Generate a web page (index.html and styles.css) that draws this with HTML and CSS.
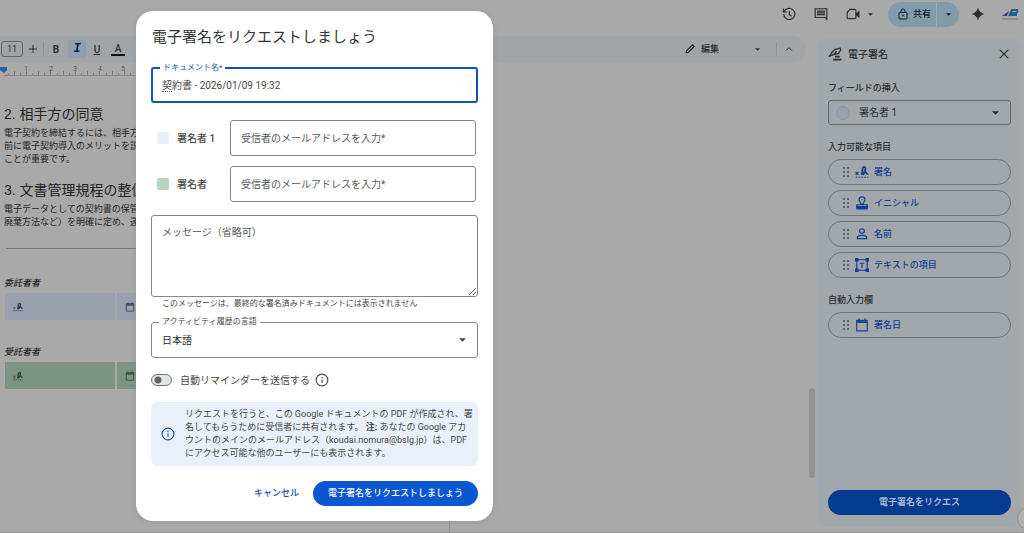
FILE: index.html
```html
<!DOCTYPE html>
<html lang="ja">
<head>
<meta charset="utf-8">
<title>電子署名</title>
<link rel="stylesheet" href="styles.css">
</head>
<body>
<svg class="defs" aria-hidden="true">
  <defs>
    <symbol id="grip" viewBox="0 0 8 12"><g fill="#62666a"><rect x="1" y="1" width="2" height="2"/><rect x="5" y="1" width="2" height="2"/><rect x="1" y="5" width="2" height="2"/><rect x="5" y="5" width="2" height="2"/><rect x="1" y="9" width="2" height="2"/><rect x="5" y="9" width="2" height="2"/></g></symbol>
    <symbol id="sign" viewBox="0 0 24 24"><g fill="none" stroke="currentColor" stroke-width="2"><path d="M1 12l5 5M6 12l-5 5"/><path stroke-width="3" d="M10 16c5-2 8-6 8-10 0-4-4-4-5 0-1 5-1 10 1 10s2-4 4-4c2 0 1 4 5 3"/><path d="M1 21h22" stroke-dasharray="3 2"/></g></symbol>
    <symbol id="cal" viewBox="0 0 24 24"><g fill="none" stroke="currentColor"><path stroke-width="2" d="M3 4h18v18H3zM7 1v4M17 1v4"/><path stroke-width="3" d="M3 7h18"/></g></symbol>
    <symbol id="down" viewBox="0 0 10 5"><path fill="currentColor" d="M0 0h10L5 5z"/></symbol>
    <symbol id="info" viewBox="0 0 24 24"><circle cx="12" cy="12" r="10" fill="none" stroke="currentColor" stroke-width="2"/><path fill="currentColor" d="M11 11h2v6h-2zM11 7h2v2h-2z"/></symbol>
  </defs>
</svg>
<div class="app">
  <header class="topbar">
    <button class="icon-btn" aria-label="変更履歴"><svg class="ic14" viewBox="0 0 24 24" fill="none" stroke="currentColor" stroke-width="2"><path d="M3 12a9.500 9.500 0 1 0 3-7L2.500 8.500M2.500 2.500v6h6M12.500 7v6l4 3"/></svg></button>
    <button class="icon-btn" aria-label="コメント"><svg class="ic14" viewBox="0 0 24 24"><path fill="none" stroke="currentColor" stroke-width="2" d="M2 3h20v18l-3-3H2z"/><path fill="currentColor" d="M5 6h14v2H5zM5 9h14v2H5zM5 12h14v2H5z"/></svg></button>
    <button class="icon-btn meet" aria-label="通話"><svg class="ic14" viewBox="0 0 24 24"><path fill="none" stroke="currentColor" stroke-width="2" d="M7 4h8q2 0 2 2v12q0 2-2 2H4q-2 0-2-2V9z"/><path fill="currentColor" d="M17 11l6-5v13l-6-5z"/></svg><svg class="caret-s"><use href="#down"/></svg></button>
    <div class="share">
      <button class="share-main"><svg class="ic12" viewBox="0 0 24 24" fill="none" stroke="currentColor" stroke-width="2"><rect x="4" y="9" width="16" height="13" rx="1"/><path d="M8 9V6a4 4 0 0 1 8 0v3"/><circle cx="12" cy="15" r="1"/></svg>共有</button>
      <button class="share-more" aria-label="共有オプション"><svg class="caret-s"><use href="#down"/></svg></button>
    </div>
    <button class="icon-btn spark" aria-label="Gemini"><svg class="ic14" viewBox="0 0 24 24"><path fill="currentColor" d="M12 1q2 9 11 11q-9 2-11 11q-2-9-11-11q9-2 11-11z"/></svg></button>
    <svg class="logo" viewBox="0 0 18 12"><path fill="#49366f" d="M1 8l7-5-2 5z"/><path fill="none" stroke="#1d5f96" stroke-width="2" d="M8 8l3-6h5q1 2-1 3h-5M8 7h8"/><path stroke="#77777d" d="M1 11h16"/></svg>
  </header>
  <div class="workspace">
    <main class="editor">
      <div class="toolbar">
        <input class="size" value="11" aria-label="フォントサイズ">
        <button class="tool plus" aria-label="拡大"><svg class="ic8" viewBox="0 0 8 8"><path stroke="currentColor" d="M4 0v8M0 4h8"/></svg></button>
        <span class="sep"></span>
        <button class="tool bold">B</button>
        <button class="tool italic">I</button>
        <button class="tool under">U</button>
        <button class="tool color">A</button>
        <button class="mode"><svg class="ic10" viewBox="0 0 24 24"><path fill="none" stroke="currentColor" stroke-width="3" d="M3 21l1-5L18 2l4 4L8 20z"/></svg><span>編集</span><svg class="caret-s"><use href="#down"/></svg></button>
        <span class="sep"></span>
        <button class="tool up" aria-label="メニューを隠す"><svg class="ic8" viewBox="0 0 24 24" fill="none" stroke="currentColor" stroke-width="3"><path d="M3 17l9-9 9 9"/></svg></button>
      </div>
      <svg class="ruler" width="150" height="18">
        <defs><pattern id="ticks" x="2" y="0" width="49" height="18" patternUnits="userSpaceOnUse"><path stroke="#77797b" d="M6.500 12v3M12.500 10v5M18.500 12v3M24.500 10v5M30.500 12v3M36.500 10v5M42.500 12v3M48.500 10v5"/></pattern></defs>
        <rect x="4" width="146" height="18" fill="url(#ticks)"/>
        <path stroke="#858789" d="M4 14.500h146"/>
        <path fill="#235fae" d="M0 6h7v3l-3 3-4-3z"/>
        <g class="nums"><text x="26" y="10">1</text><text x="51" y="10">2</text><text x="75" y="10">3</text><text x="100" y="10">4</text><text x="123" y="10">5</text></g>
      </svg>
      <article class="doc">
        <h2>2. 相手方の同意</h2>
        <p>電子契約を締結するには、相手方の<br>前に電子契約導入のメリットを説明<br>ことが重要です。</p>
        <h2>3. 文書管理規程の整備</h2>
        <p>電子データとしての契約書の保管・<br>廃棄方法など）を明確に定め、運用</p>
        <hr>
        <div class="party">委託者者</div>
        <div class="slots"><span class="slot wide"><svg class="ic10"><use href="#sign"/></svg></span><span class="slot"><svg class="ic10"><use href="#cal"/></svg></span></div>
        <div class="party">受託者者</div>
        <div class="slots green"><span class="slot wide"><svg class="ic10"><use href="#sign"/></svg></span><span class="slot"><svg class="ic10"><use href="#cal"/></svg></span></div>
      </article>
      <span class="thumb"></span>
      <span class="page-edge"></span>
    </main>
    <aside class="panel">
      <div class="panel-head"><svg class="ic14" viewBox="0 0 24 24"><path fill="none" stroke="currentColor" stroke-width="2" d="M1 16c3-1 4-3 5-6l6-6 9-2 1 3-4 6-8 2 5-6M1 16l9-3"/><path fill="currentColor" d="M12 15h8v3h-8zM9 20h14v3H9z"/></svg><h1>電子署名</h1><button class="close" aria-label="閉じる"><svg class="ic10" viewBox="0 0 24 24"><path stroke="currentColor" stroke-width="3" d="M2 2l20 20M22 2L2 22"/></svg></button></div>
      <label class="caption" for="who">フィールドの挿入</label>
      <div class="pick"><span class="dot"></span><select id="who"><option>署名者 1</option></select><svg class="caret"><use href="#down"/></svg></div>
      <h3 class="caption">入力可能な項目</h3>
      <div class="fields">
        <button class="field"><svg class="grip"><use href="#grip"/></svg><svg class="ic14"><use href="#sign"/></svg>署名</button>
        <button class="field"><svg class="grip"><use href="#grip"/></svg><svg class="ic14" viewBox="0 0 24 24"><path fill="none" stroke="currentColor" stroke-width="2" d="M10 14c0-3-3-5-3-8 0-6 10-6 10 0 0 3-3 5-3 8zM3 20v-5h18v5"/><circle cx="12" cy="6" r="1" fill="currentColor"/><path fill="currentColor" d="M2 17h20v6H2z"/></svg>イニシャル</button>
        <button class="field"><svg class="grip"><use href="#grip"/></svg><svg class="ic14" viewBox="0 0 24 24" fill="none" stroke="currentColor" stroke-width="2"><circle cx="12" cy="7" r="4"/><path d="M4 20v-2c0-5 16-5 16 0v2z"/></svg>名前</button>
        <button class="field"><svg class="grip"><use href="#grip"/></svg><svg class="ic14" viewBox="0 0 24 24"><path fill="none" stroke="currentColor" stroke-width="2" d="M3 3h18v18H3zM8 9h8M12 9v8"/><path fill="currentColor" d="M0 0h6v6H0zM18 0h6v6h-6zM0 18h6v6H0zM18 18h6v6h-6z"/></svg>テキストの項目</button>
      </div>
      <h3 class="caption">自動入力欄</h3>
      <div class="fields">
        <button class="field"><svg class="grip"><use href="#grip"/></svg><svg class="ic14"><use href="#cal"/></svg>署名日</button>
      </div>
      <button class="request">電子署名をリクエス</button>
    </aside>
  </div>
  <span class="bubble"></span>
</div>

<form class="dialog" role="dialog" aria-labelledby="dlg-title">
  <h2 id="dlg-title">電子署名をリクエストしましょう</h2>
  <div class="outlined focus"><label for="docname">ドキュメント名*</label><input id="docname" value="契約書 - 2026/01/09 19:32"><span class="spell"></span></div>
  <div class="signers">
    <div class="signer"><span class="swatch"></span><label for="s1">署名者 1</label><input id="s1" type="email" placeholder="受信者のメールアドレスを入力*"></div>
    <div class="signer"><span class="swatch mint"></span><label for="s2">署名者</label><input id="s2" type="email" placeholder="受信者のメールアドレスを入力*"></div>
  </div>
  <textarea class="message" aria-label="メッセージ" placeholder="メッセージ（省略可）"></textarea>
  <p class="hint">このメッセージは、最終的な署名済みドキュメントには表示されません</p>
  <div class="outlined"><label for="lang">アクティビティ履歴の言語</label><select id="lang"><option>日本語</option></select><svg class="caret"><use href="#down"/></svg></div>
  <div class="remind"><input id="remind" type="checkbox" role="switch"><label for="remind">自動リマインダーを送信する</label><svg class="ic14"><use href="#info"/></svg></div>
  <div class="notice"><svg class="ic14"><use href="#info"/></svg><p>リクエストを行うと、この Google ドキュメントの PDF が作成され、署<br>名してもらうために受信者に共有されます。 <b>注:</b> あなたの Google アカ<br>ウントのメインのメールアドレス（koudai.nomura@bslg.jp）は、PDF<br>にアクセス可能な他のユーザーにも表示されます。</p></div>
  <div class="actions"><button type="button" class="cancel">キャンセル</button><button type="button" class="submit">電子署名をリクエストしましょう</button></div>
</form>
</body>
</html>
```
FILE: styles.css
```css
* { box-sizing: border-box; }
body {
  margin: 0;
  background: #a9a9a9;
  color: #2b2d2f;
  font: 9px/13px Roboto, "Noto Sans CJK JP", sans-serif;
}
h1, h2, h3, p { margin: 0; }
button, input, select, textarea { font: inherit; color: inherit; margin: 0; }
button { border: 0; padding: 0; background: none; display: flex; align-items: center; justify-content: center; }
svg { flex: none; display: block; }
.defs { position: absolute; width: 0; height: 0; }
.ic8 { width: 8px; height: 8px; }
.ic10 { width: 10px; height: 10px; }
.ic12 { width: 12px; height: 12px; }
.ic14 { width: 14px; height: 14px; }
.caret { width: 7px; height: 4px; }
.caret-s { width: 5px; height: 3px; }

.app { min-height: 100vh; display: flex; flex-direction: column; position: relative; overflow: hidden; border-bottom: 1px solid #929292; }
.topbar { display: flex; align-items: center; justify-content: flex-end; height: 28px; padding-right: 5px; }
.icon-btn { margin-right: 18px; }
.icon-btn.meet { gap: 8px; margin-right: 15px; }
.icon-btn.spark { margin: 0 16px 0 12px; }
.share { display: flex; height: 25px; border-radius: 13px; overflow: hidden; background: #819bab; color: #10202f; }
.share-main { width: 49px; gap: 4px; padding-left: 4px; font-weight: 500; border-right: 1px solid #a0adb5; }
.share-more { width: 22px; }
.logo { width: 18px; height: 12px; }

.workspace { flex: 1; display: flex; gap: 4px; padding: 8px 4px 5px 0; }
.editor { flex: 1; position: relative; padding-right: 7px; min-width: 0; }
.toolbar { display: flex; align-items: center; height: 26px; border-radius: 0 13px 13px 0; background: #a0a5a9; padding: 0 8px 0 1px; }
.size { width: 22px; height: 16px; border: 1px solid #606468; border-radius: 3px; background: none; text-align: center; padding: 0; }
.tool { width: 20px; height: 18px; font-size: 10px; font-weight: 500; }
.sep { width: 1px; height: 14px; background: #8d9297; }
.tool.bold { width: 24px; font-weight: 700; }
.tool.italic { width: 18px; border-radius: 3px; background: #919db3; color: #0b1f42; font: italic bold 12px/18px "Liberation Mono", monospace; }
.tool.under { width: 22px; text-decoration: underline; }
.tool.color { width: 14px; height: 13px; margin-left: 3px; border-bottom: 2px solid #111; }
.mode { margin-left: auto; margin-right: 16px; font-weight: 500; }
.mode span { margin: 0 36px 0 6px; }
.tool.up { width: 18px; margin-left: 3px; }
.ruler { margin-bottom: 26px; margin-top: -1px; }
.nums { font-size: 7px; fill: #55585a; text-anchor: middle; }

.doc { width: 446px; padding-left: 4px; margin-top: -1px; color: #242424; font-family: "Liberation Sans", "Noto Sans CJK JP", sans-serif; }
.doc h2 { font-size: 14px; line-height: 20px; font-weight: 400; margin-bottom: 3px; }
.doc p + h2 { margin-top: 14px; }
.doc hr { height: 1px; border: 0; background: #757575; margin: 19px 0 28px 2px; }
.party { font-style: italic; height: 13px; margin-bottom: 3px; font-size: 9px; font-weight: 500; }
.slots { display: flex; gap: 2px; margin: 0 0 26px 1px; }
.slot { display: flex; align-items: center; height: 27px; width: 110px; padding-left: 8px; background: #9ba0ae; color: #2e3a52; }
.green .slot { background: #7b9484; color: #24483a; }
.thumb { position: absolute; right: -2px; top: 352px; width: 6px; height: 90px; border-radius: 3px; background: #929292; }
.page-edge { position: absolute; left: 449px; top: 480px; bottom: -5px; width: 1px; background: #8e8e8e; }

.panel { flex: 0 0 203px; display: flex; flex-direction: column; margin-top: 2px; padding: 0 9px 12px 11px; border-radius: 11px; background: #a1a7ab; }
.panel-head { display: flex; align-items: center; gap: 6px; height: 32px; }
.panel-head h1 { font-size: 10px; font-weight: 500; flex: 1; }
.close { width: 14px; height: 14px; }
.caption { display: block; font-size: 9px; font-weight: 500; line-height: 13px; margin: 12px 0 5px; }
.pick { display: flex; align-items: center; height: 25px; border: 1px solid #66696c; border-radius: 3px; padding: 0 11px 0 7px; }
.pick select { flex: 1; font-size: 10px; margin-left: 9px; }
.pick + .caption { margin-top: 16px; }
.dot { width: 14px; height: 14px; border: 1px solid #8f94a5; border-radius: 50%; background: #9ca0ac; }
select { appearance: none; border: 0; padding: 0; background: none; outline: 0; }
.fields { display: flex; flex-direction: column; gap: 5px; }
.fields + .caption { margin-top: 16px; }
.field { justify-content: flex-start; gap: 5px; height: 26px; padding-left: 13px; border: 1px solid #717578; border-radius: 13px; color: #103f93; font-weight: 500; }
.grip { width: 8px; height: 12px; }
.request { margin-top: auto; height: 25px; border-radius: 13px; background: #033b91; color: #a9b7cf; font-weight: 700; }
.bubble { position: absolute; right: -16px; bottom: 2px; width: 23px; height: 23px; border: 1px solid #8e8e8e; border-radius: 50%; background: #b0b0b0; }

.dialog { position: absolute; left: 136px; top: 11px; width: 357px; padding: 16px 15px 15px; border-radius: 17px; background: #fff; color: #444746; font-size: 10px; box-shadow: 0 1px 4px #8888; }
.dialog h2 { font-size: 15px; line-height: 20px; font-weight: 400; margin-bottom: 20px; padding-left: 1px; color: #333537; }
.outlined { position: relative; display: flex; align-items: center; height: 36px; border: 1px solid #85888a; border-radius: 3px; padding: 0 11px 0 10px; }
.outlined.focus { border: 2px solid #1552b5; padding: 0 9px; }
.outlined label { position: absolute; left: 7px; top: -7px; padding: 0 3px; background: #fff; font-size: 8px; line-height: 12px; }
.focus label { color: #1552b5; }
.outlined input, .outlined select { flex: 1; border: 0; outline: 0; padding: 0; background: none; }
.outlined select { color: #1f1f1f; }
.spell { position: absolute; left: 9px; top: 22px; width: 10px; border-top: 1px dotted #555; }
.signers { display: flex; flex-direction: column; gap: 10px; margin: 17px 2px 13px 6px; }
.signer { display: flex; align-items: center; }
.swatch { width: 12px; height: 12px; border-radius: 2px; background: #e8edfc; margin-right: 8px; }
.swatch.mint { background: #b7d5c3; }
.signer label { width: 53px; font-weight: 500; }
.signer input { flex: 1; min-width: 0; height: 36px; border: 1px solid #85888a; border-radius: 3px; padding: 0 10px; }
::placeholder { color: #55585a; opacity: 1; }
.message { display: block; width: 100%; height: 82px; border: 1px solid #85888a; border-radius: 3px; padding: 10px; resize: vertical; }
.hint { font-size: 8px; line-height: 12px; padding-left: 11px; margin: 1px 0 12px; }
.remind { display: flex; align-items: center; height: 14px; margin: 15px 0; }
.remind label { margin: 0 5px 0 8px; }
.remind input { appearance: none; width: 21px; height: 12px; border: 1px solid #6f7376; border-radius: 6px; background: radial-gradient(circle at 6px 5px, #62666a 3px, #e1e5e8 4px); }
.notice { display: flex; align-items: center; gap: 10px; border-radius: 6px; background: #eaeffc; padding: 6px 4px 6px 10px; font-size: 9px; line-height: 13px; }
.notice p { white-space: nowrap; }
.notice svg { color: #1759b5; }
.actions { display: flex; justify-content: flex-end; align-items: center; gap: 14px; margin-top: 15px; font-size: 9px; font-weight: 500; }
.cancel { color: #1552a5; }
.submit { height: 25px; padding: 0 15px; border-radius: 13px; background: #0b57d0; color: #fff; }
```
